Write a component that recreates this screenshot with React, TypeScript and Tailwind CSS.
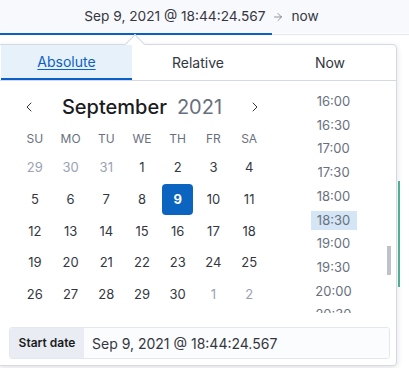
import React from "react";
import { ChevronLeft, ChevronRight, ArrowRight } from "lucide-react";

const weeks: { d: number; muted?: boolean }[][] = [
  [{ d: 29, muted: true }, { d: 30, muted: true }, { d: 31, muted: true }, { d: 1 }, { d: 2 }, { d: 3 }, { d: 4 }],
  [{ d: 5 }, { d: 6 }, { d: 7 }, { d: 8 }, { d: 9 }, { d: 10 }, { d: 11 }],
  [{ d: 12 }, { d: 13 }, { d: 14 }, { d: 15 }, { d: 16 }, { d: 17 }, { d: 18 }],
  [{ d: 19 }, { d: 20 }, { d: 21 }, { d: 22 }, { d: 23 }, { d: 24 }, { d: 25 }],
  [{ d: 26 }, { d: 27 }, { d: 28 }, { d: 29 }, { d: 30 }, { d: 1, muted: true }, { d: 2, muted: true }],
];

const dayNames = ["SU", "MO", "TU", "WE", "TH", "FR", "SA"];
const times = ["16:00", "16:30", "17:00", "17:30", "18:00", "18:30", "19:00", "19:30", "20:00", "20:30"];

function App() {
  return (
    <div
      className="relative w-[409px] h-[368px] overflow-hidden bg-white text-[#343741]"
      style={{ fontFamily: "Inter, 'Noto Sans', sans-serif" }}
    >
      {/* top date range bar */}
      <div className="bg-[#f8f9fc] h-[33px] flex items-center justify-center gap-[7px] text-[13.7px] pr-[6px]">
        <span>Sep 9, 2021 @ 18:44:24.567</span>
        <ArrowRight size={12} strokeWidth={1.5} className="text-[#69707d]" />
        <span>now</span>
      </div>
      <div className="flex h-[2px]">
        <div className="w-[272px] bg-[#0b5fc9]" />
        <div className="flex-1 mt-px h-px bg-[#e3e8f0]" />
      </div>

      {/* background chart sliver */}
      <div className="absolute left-[398px] top-[181px] w-[2px] h-[106px] bg-[#54b399]" />

      {/* popover */}
      <div className="absolute left-[-1px] top-[44px] w-[398px] h-[322px] bg-white border border-[#d3dae6] rounded-br-[4px] rounded-tr-[4px] shadow-[0_2px_6px_rgba(0,0,0,0.12)]">
        {/* tabs */}
        <div className="grid grid-cols-3 h-[36px] border-b border-[#d3dae6] text-[14px]">
          <div className="ml-px bg-[#e6f1fa] border-b-2 border-[#0b5fc9] flex items-center justify-center">
            <span className="text-[#0b5fc9] underline underline-offset-2">Absolute</span>
          </div>
          <div className="flex items-center justify-center">Relative</div>
          <div className="flex items-center justify-center">Now</div>
        </div>

        {/* body */}
        <div className="flex h-[232px]">
          <div className="w-[291px] pl-[17px] pt-[14px]">
            <div className="w-[250px] h-[24px] px-[4px] flex items-center justify-between">
              <ChevronLeft size={16} strokeWidth={1.5} className="text-[#343741]" />
              <div className="flex items-baseline gap-[10px] text-[20px] leading-none">
                <span className="font-medium text-[#1a1c21]">September</span>
                <span className="text-[#69707d]">2021</span>
              </div>
              <ChevronRight size={16} strokeWidth={1.5} className="text-[#343741]" />
            </div>
            <div className="grid grid-cols-7 w-[250px] mt-[10px] h-[20px] items-center text-[12px] text-[#69707d]">
              {dayNames.map((n) => (
                <div key={n} className="text-center">{n}</div>
              ))}
            </div>
            <div className="w-[250px] mt-[3px]">
              {weeks.map((w, i) => (
                <div key={i} className="grid grid-cols-7 h-[31.75px] items-center text-[13px]">
                  {w.map((c, j) =>
                    c.d === 9 && !c.muted ? (
                      <div key={j} className="flex justify-center">
                        <div className="w-[31px] h-[31px] rounded-[4px] bg-[#0b64c0] text-white font-bold flex items-center justify-center">
                          9
                        </div>
                      </div>
                    ) : (
                      <div key={j} className={"text-center " + (c.muted ? "text-[#98a2b3]" : "text-[#343741]")}>
                        {c.d}
                      </div>
                    )
                  )}
                </div>
              ))}
            </div>
          </div>

          {/* times */}
          <div className="relative flex-1 overflow-hidden">
            <div className="flex flex-col items-center pr-[20px] pt-[9px] text-[13px] text-[#69707d]">
              {times.map((t) => (
                <div key={t} className="h-[23.7px] flex items-center">
                  <span
                    className={
                      t === "18:30"
                        ? "w-[46px] h-[19px] bg-[#d4e5f5] flex items-center justify-center"
                        : "w-[46px] text-center"
                    }
                  >
                    {t}
                  </span>
                </div>
              ))}
            </div>
            <div className="absolute right-[5px] top-[165px] w-[4px] h-[29px] bg-[#bfc3c9]" />
          </div>
        </div>

        {/* start date */}
        <div className="pt-[14px] pl-[9px]">
          <div className="w-[381px] h-[32px] flex border border-[#e3e8f0] rounded-[3px] overflow-hidden">
            <div className="w-[74px] bg-[#e9edf3] flex items-center justify-center text-[12px] font-semibold text-[#1a1c21]">
              Start date
            </div>
            <div className="flex-1 bg-[#fbfcfd] flex items-center pl-[8px] text-[14px] text-[#343741]">
              Sep 9, 2021 @ 18:44:24.567
            </div>
          </div>
        </div>
      </div>

      {/* caret */}
      <div className="absolute left-[124px] top-[33px] w-[22px] h-[12px] overflow-hidden">
        <div className="absolute left-[4px] top-[4px] w-[14px] h-[14px] rotate-45 bg-white border-l border-t border-[#d3dae6]" />
      </div>
    </div>
  );
}

export default App;
